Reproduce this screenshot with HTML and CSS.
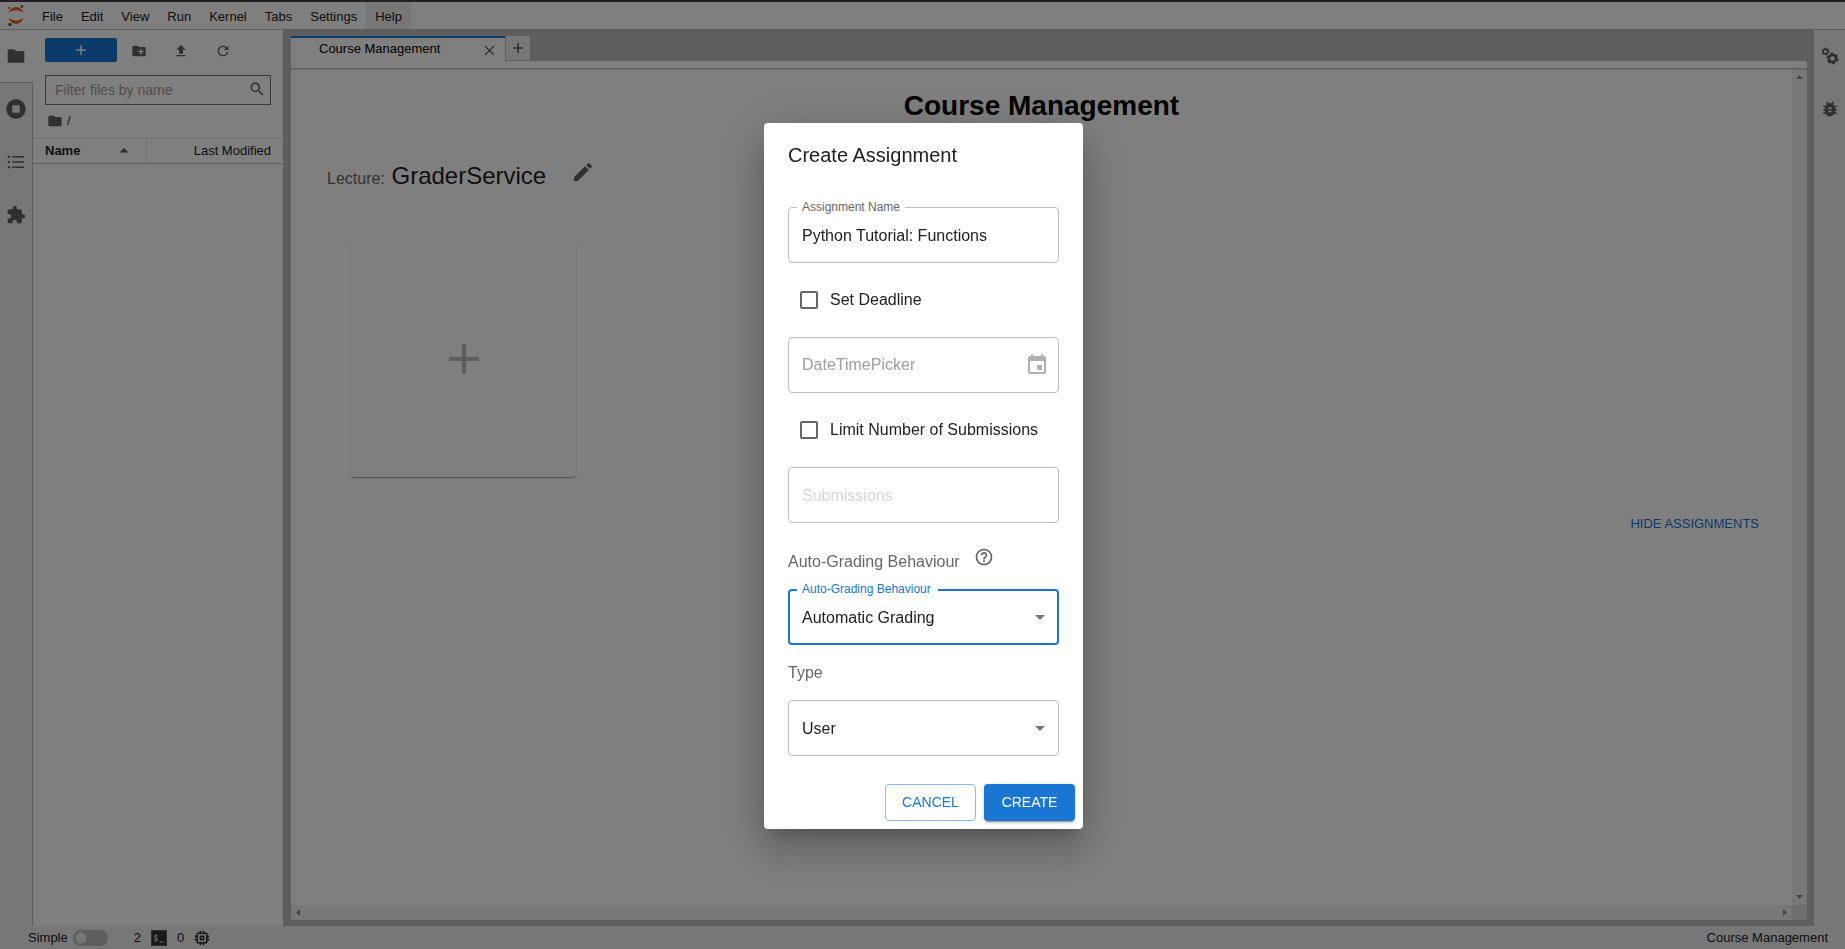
FILE: index.html
```html
<!DOCTYPE html>
<html lang="en">
<head>
<meta charset="utf-8">
<title>Course Management</title>
<link rel="stylesheet" href="styles.css">
</head>
<body>
<div class="app">
  <header class="menubar">
    <svg class="logo" viewBox="0 0 32 27" aria-hidden="true">
      <path fill="#f0600f" d="M8.500 10.800C11 3 21 3 23.500 10.800C19.500 7.500 12.500 7.500 8.500 10.800z"/>
      <path fill="#f0600f" d="M8.500 16C11 23.800 21 23.800 23.500 16C19.500 19.300 12.500 19.300 8.500 16z"/>
      <circle cx="22" cy="4.500" r="1.400" fill="#616161"/><circle cx="9" cy="6" r="0.900" fill="#616161"/><circle cx="10" cy="22.500" r="1.700" fill="#616161"/>
    </svg>
    <nav class="menus">
      <button class="menu">File</button><button class="menu">Edit</button><button class="menu">View</button><button class="menu">Run</button><button class="menu">Kernel</button><button class="menu">Tabs</button><button class="menu">Settings</button><button class="menu menu-active">Help</button>
    </nav>
  </header>

  <div class="workspace">
    <nav class="rail rail-left">
      <button class="rail-tab rail-current" aria-label="File Browser"><svg class="icon-20" viewBox="0 0 24 24"><path d="M10 4H4c-1.100 0-1.990.900-1.990 2L2 18c0 1.100.900 2 2 2h16c1.100 0 2-.900 2-2V8c0-1.100-.900-2-2-2h-8l-2-2z"/></svg></button>
      <button class="rail-tab" aria-label="Running"><svg class="icon-20" viewBox="0 0 512 512"><path d="M256 8C119 8 8 119 8 256s111 248 248 248 248-111 248-248S393 8 256 8zm96 328c0 8.800-7.200 16-16 16H176c-8.800 0-16-7.200-16-16V176c0-8.800 7.200-16 16-16h160c8.800 0 16 7.200 16 16v160z"/></svg></button>
      <button class="rail-tab" aria-label="Table of Contents"><svg class="icon-20" viewBox="0 0 20 20"><path d="M6 4h12v1.500H6zM6 9.300h12v1.500H6zM6 14.500h12V16H6z"/><circle cx="3" cy="4.800" r="1.200"/><circle cx="3" cy="10" r="1.200"/><circle cx="3" cy="15.200" r="1.200"/></svg></button>
      <button class="rail-tab" aria-label="Extensions"><svg class="icon-20" viewBox="0 0 24 24"><path d="M20.500 11H19V7c0-1.100-.900-2-2-2h-4V3.500C13 2.120 11.880 1 10.500 1S8 2.120 8 3.500V5H4c-1.100 0-1.990.900-1.990 2v3.800H3.500c1.490 0 2.700 1.210 2.700 2.700s-1.210 2.700-2.700 2.700H2V20c0 1.100.900 2 2 2h3.800v-1.500c0-1.490 1.210-2.700 2.700-2.700 1.490 0 2.700 1.210 2.700 2.700V22H17c1.100 0 2-.900 2-2v-4h1.500c1.380 0 2.500-1.120 2.500-2.500S21.880 11 20.500 11z"/></svg></button>
    </nav>

    <aside class="files">
      <div class="file-tools">
        <button class="new-launcher" aria-label="New Launcher"><svg class="icon-16" viewBox="0 0 16 16"><path d="M7.300 3.200h1.500v4.100h4.100v1.500H8.800v4.100H7.300V8.800H3.200V7.300h4.100z"/></svg></button>
        <button class="tool" aria-label="New Folder"><svg class="icon-16" viewBox="0 0 24 24"><path d="M20 6h-8l-2-2H4c-1.110 0-1.990.890-1.990 2L2 18c0 1.110.890 2 2 2h16c1.110 0 2-.890 2-2V8c0-1.110-.890-2-2-2zm-1 8h-3v3h-2v-3h-3v-2h3V9h2v3h3v2z"/></svg></button>
        <button class="tool" aria-label="Upload"><svg class="icon-16" viewBox="0 0 24 24"><path d="M9 16h6v-6h4l-7-7-7 7h4zm-4 2h14v2H5z"/></svg></button>
        <button class="tool" aria-label="Refresh"><svg class="icon-16" viewBox="0 0 18 18"><path d="M9 13.500c-2.490 0-4.500-2.010-4.500-4.500S6.510 4.500 9 4.500c1.240 0 2.360.520 3.170 1.330L10 8h5V3l-1.760 1.760C12.150 3.680 10.660 3 9 3 5.690 3 3.010 5.690 3.010 9S5.690 15 9 15c2.970 0 5.430-2.160 5.900-5h-1.520c-.460 2-2.240 3.500-4.380 3.500z"/></svg></button>
      </div>
      <div class="filter">
        <input class="filter-input" type="text" placeholder="Filter files by name" aria-label="Filter files by name">
        <svg class="icon-16" viewBox="0 0 18 18"><path d="M12.100 10.900h-.700l-.200-.200c.800-.900 1.300-2.200 1.300-3.500 0-3-2.400-5.400-5.400-5.400S1.800 4.200 1.800 7.100s2.400 5.400 5.400 5.400c1.300 0 2.500-.500 3.500-1.300l.200.200v.700l4.100 4.100 1.200-1.200-4.100-4.100zm-5 0c-2.100 0-3.700-1.700-3.700-3.700s1.700-3.700 3.700-3.700 3.700 1.700 3.700 3.700-1.600 3.700-3.700 3.700z"/></svg>
      </div>
      <div class="crumbs"><svg class="icon-16" viewBox="0 0 24 24"><path d="M10 4H4c-1.100 0-1.990.900-1.990 2L2 18c0 1.100.900 2 2 2h16c1.100 0 2-.900 2-2V8c0-1.100-.900-2-2-2h-8l-2-2z"/></svg><span>/</span></div>
      <table class="listing">
        <thead><tr>
          <th class="col-name"><span class="col-inner">Name<svg class="sort" viewBox="0 0 10 5"><path d="M0.500 4.500L5 0l4.500 4.500z"/></svg></span></th>
          <th class="col-date">Last Modified</th>
        </tr></thead>
      </table>
    </aside>

    <main class="dock">
      <div class="tabs">
        <div class="tab"><span class="tab-title">Course Management</span><button class="tab-close" aria-label="Close"><svg class="icon-16" viewBox="0 0 16 16"><path d="M4 4l9 9M13 4l-9 9" fill="none" stroke="#616161" stroke-width="1.300"/></svg></button></div>
        <button class="tab-add" aria-label="New tab"><svg class="icon-16" viewBox="0 0 16 16"><path d="M7.200 3h1.600v4.200H13v1.600H8.800V13H7.200V8.800H3V7.200h4.200z"/></svg></button>
      </div>
      <div class="doc-bar"></div>
      <div class="doc">
        <section class="page">
          <h1 class="page-title">Course Management</h1>
          <div class="lecture"><h2 class="lecture-name"><small class="lecture-tag">Lecture:</small> GraderService</h2>
            <button class="edit" aria-label="Edit lecture"><svg class="icon-24" viewBox="0 0 24 24"><path d="M3 17.250V21h3.750L17.810 9.940l-3.750-3.750L3 17.250zM20.710 7.040c.390-.390.390-1.020 0-1.410l-2.340-2.340a.996.996 0 0 0-1.410 0l-1.830 1.830 3.750 3.750 1.830-1.830z"/></svg></button></div>
          <button class="card" aria-label="Add assignment"><svg class="card-plus" viewBox="0 0 30 30"><path d="M13 0h4v13h13v4H17v13h-4V17H0v-4h13z"/></svg></button>
          <button class="hide">HIDE ASSIGNMENTS</button>
        </section>
        <div class="track track-v"><svg class="arrow" viewBox="0 0 15 15"><path d="M4 10l3.500-4L11 10z"/></svg><svg class="arrow" viewBox="0 0 15 15"><path d="M4 5l3.500 4L11 5z"/></svg></div>
        <div class="track track-h"><svg class="arrow" viewBox="0 0 15 15"><path d="M9 4L5 7.500 9 11z"/></svg><svg class="arrow" viewBox="0 0 15 15"><path d="M6 4l4 3.500L6 11z"/></svg></div>
        <div class="track-corner"></div>
      </div>
    </main>

    <nav class="rail rail-right">
      <button class="rail-tab" aria-label="Property Inspector"><svg class="icon-20" viewBox="0 0 20 20">
        <g fill="none" stroke="#616161"><circle cx="5.500" cy="5.500" r="2.400" stroke-width="1.600"/><circle cx="5.500" cy="5.500" r="3.400" stroke-width="1.200" stroke-dasharray="1.600 1.960"/><circle cx="12.500" cy="12.500" r="3.600" stroke-width="2.600"/><circle cx="12.500" cy="12.500" r="5.200" stroke-width="1.600" stroke-dasharray="2.800 2.645"/></g></svg></button>
      <button class="rail-tab" aria-label="Debugger"><svg class="icon-20" viewBox="0 0 24 24"><path d="M20 8h-2.810c-.450-.780-1.070-1.450-1.820-1.960L17 4.410 15.590 3l-2.170 2.170C12.960 5.060 12.490 5 12 5c-.490 0-.960.060-1.410.170L8.410 3 7 4.410l1.620 1.630C7.880 6.550 7.260 7.220 6.810 8H4v2h2.090c-.050.330-.090.660-.090 1v1H4v2h2v1c0 .340.040.670.090 1H4v2h2.810c1.040 1.790 2.970 3 5.190 3s4.150-1.210 5.190-3H20v-2h-2.090c.050-.330.090-.660.090-1v-1h2v-2h-2v-1c0-.340-.040-.670-.090-1H20V8zm-6 8h-4v-2h4v2zm0-4h-4v-2h4v2z"/></svg></button>
    </nav>
  </div>

  <footer class="status">
    <label class="simple">Simple <input class="switch" type="checkbox" role="switch"></label>
    <span class="counts"><span>2</span>
      <svg class="icon-16" viewBox="0 0 16 16"><rect width="16" height="16" fill="#616161"/><rect x="1" y="1" width="14" height="14" fill="#333"/><path d="M6.500 6.200C5.800 5 3.300 5.200 3.300 6.700c0 1.700 3.400 1.100 3.400 2.900 0 1.600-2.800 1.700-3.600.300M5 4.300v7.400M8.500 12h4" fill="none" stroke="#ddd"/></svg>
      <span>0</span>
      <svg class="icon-chip" viewBox="2 2 20 20"><path d="M15 9H9v6h6V9zm-2 4h-2v-2h2v2zm8-2V9h-2V7c0-1.100-.900-2-2-2h-2V3h-2v2h-2V3H9v2H7c-1.100 0-2 .900-2 2v2H3v2h2v2H3v2h2v2c0 1.100.900 2 2 2h2v2h2v-2h2v2h2v-2h2c1.100 0 2-.900 2-2v-2h2v-2h-2v-2h2zm-4 6H7V7h10v10z"/></svg>
    </span>
    <span class="status-right">Course Management</span>
  </footer>
</div>

<div class="backdrop">
  <form class="dialog" role="dialog" aria-labelledby="dialog-title">
    <h2 class="dialog-title" id="dialog-title">Create Assignment</h2>
    <div class="fields">
      <div class="field"><label class="float" for="name">Assignment Name</label><input class="control" id="name" type="text" value="Python Tutorial: Functions"></div>
      <label class="check"><input class="box" type="checkbox">Set Deadline</label>
      <div class="field"><input class="control muted" type="text" placeholder="DateTimePicker" aria-label="DateTimePicker" disabled><svg class="calendar icon-24" viewBox="0 0 24 24"><path d="M17 12h-5v5h5v-5zM16 1v2H8V1H6v2H5c-1.110 0-1.990.900-1.990 2L3 19c0 1.100.890 2 2 2h14c1.100 0 2-.900 2-2V5c0-1.100-.900-2-2-2h-1V1h-2zm3 18H5V8h14v11z"/></svg></div>
      <label class="check"><input class="box" type="checkbox">Limit Number of Submissions</label>
      <div class="field"><input class="control faint" type="text" placeholder="Submissions" aria-label="Submissions" disabled></div>
    </div>
    <div class="caption caption-help"><span>Auto-Grading Behaviour</span><svg class="help icon-20" viewBox="0 0 24 24"><path d="M11 18h2v-2h-2v2zm1-16C6.480 2 2 6.480 2 12s4.480 10 10 10 10-4.480 10-10S17.520 2 12 2zm0 18c-4.410 0-8-3.590-8-8s3.590-8 8-8 8 3.590 8 8-3.590 8-8 8zm0-14c-2.210 0-4 1.790-4 4h2c0-1.100.900-2 2-2s2 .900 2 2c0 2-3 1.750-3 5h2c0-2.250 3-2.500 3-5 0-2.210-1.790-4-4-4z"/></svg></div>
    <div class="field focused"><label class="float" for="grading">Auto-Grading Behaviour</label><select class="control" id="grading"><option>Automatic Grading</option></select><svg class="caret" viewBox="0 0 10 5"><path d="M0 0l5 5 5-5z"/></svg></div>
    <label class="caption caption-type" for="type">Type</label>
    <div class="field"><select class="control" id="type"><option>User</option></select><svg class="caret" viewBox="0 0 10 5"><path d="M0 0l5 5 5-5z"/></svg></div>
    <div class="actions"><button class="btn btn-outline" type="button">CANCEL</button><button class="btn btn-solid" type="button">CREATE</button></div>
  </form>
</div>
</body>
</html>
```
FILE: styles.css
```css
* { box-sizing: border-box; }
body { margin: 0; overflow: hidden; font-family: "Liberation Sans", Arial, sans-serif; font-size: 13px; color: #212121; }
button, input, select { font: inherit; color: inherit; }
button { border: 0; padding: 0; background: none; display: flex; align-items: center; justify-content: center; }
svg { display: block; flex: none; fill: #616161; }
.icon-16 { width: 16px; height: 16px; }
.icon-20 { width: 20px; height: 20px; }
.icon-24 { width: 24px; height: 24px; }
.icon-chip { width: 16px; height: 16px; fill: #333; }

.app { height: 100vh; display: flex; flex-direction: column; background: #eee; border-top: 2px solid #222; }
.menubar { display: flex; height: 28px; background: #fff; border-bottom: 1px solid #bdbdbd; }
.logo { width: 32px; height: 27px; margin-right: 1px; }
.menus { display: flex; }
.menu { padding: 2px 9px 0; }
.menu-active { background: #eee; }

.workspace { flex: 1; display: flex; min-height: 0; }
.rail { display: flex; flex-direction: column; width: 33px; background: #eee; }
.rail-left { background: linear-gradient(#bdbdbd, #bdbdbd) right / 1px 100% no-repeat #eee; }
.rail-right { width: 31px; }
.rail-tab { height: 53px; padding-bottom: 2px; }
.rail-left .rail-tab { padding-right: 1px; }
.rail-left .rail-current { padding-bottom: 0; background: #fff; border-bottom: 1px solid #bdbdbd; }

.files { width: 250px; background: #fff; display: flex; flex-direction: column; }
.file-tools { display: flex; padding: 8px 12px; }
.new-launcher { width: 72px; height: 24px; margin-right: 1px; background: #1976d2; border-radius: 2px; }
.new-launcher svg { fill: #fff; }
.tool { width: 42px; padding-top: 2px; }
.filter { display: flex; align-items: center; height: 30px; margin: 5px 12px 0; border: 1px solid #757575; padding: 0 5px 2px 9px; }
.filter-input { flex: 1; min-width: 0; border: 0; padding: 2px 0 0; outline: 0; background: none; font-size: 14px; }
.filter-input::placeholder { color: #9e9e9e; }
.crumbs { display: flex; align-items: center; gap: 4px; height: 33px; padding: 0 14px 2px; }
.listing { width: 100%; border-collapse: collapse; table-layout: fixed; }
.listing th { height: 25px; padding: 0 12px 1px; border-top: 1px solid #e0e0e0; border-bottom: 1px solid #bdbdbd; text-align: left; }
.listing .col-name { width: 113px; border-right: 1px solid #e0e0e0; }
.listing .col-date { font-weight: 400; text-align: right; }
.col-inner { display: flex; align-items: center; justify-content: space-between; padding-right: 5px; }
.sort { width: 10px; height: 5px; }

.dock { flex: 1; min-width: 0; display: flex; flex-direction: column; background: #bdbdbd; padding: 6px 7px 6px 8px; }
.tabs { display: flex; height: 25px; }
.tab { display: flex; align-items: center; width: 214px; background: #fff; border-top: 2px solid #1976d2; padding: 0 8px 0 28px; color: #000; }
.tab-title { flex: 1; padding-bottom: 2px; }
.tab-add { width: 26px; background: #eee; border: solid #bdbdbd; border-width: 0 1px 1px; }
.doc-bar { height: 8px; background: #fff; border-bottom: 1px solid #bdbdbd; box-shadow: 0 1px 1px rgba(0, 0, 0, .1); position: relative; }
.doc { flex: 1; min-height: 0; display: grid; grid-template: 1fr 15px / 1fr 15px; background: #fff; }
.page { padding: 21px 33px 0 36px; display: flex; flex-direction: column; align-items: flex-start; min-height: 0; }
.page-title { align-self: stretch; margin: 0 -33px 0 -36px; text-align: center; font-size: 28px; line-height: 32px; color: #000; }
.lecture { display: flex; gap: 25px; margin-top: 38px; align-items: flex-start; }
.lecture-name { margin: 0; font-size: 24px; line-height: 32px; font-weight: 400; }
.lecture-tag { font-size: 16px; color: #666; }
.edit { height: 24px; }
.card { width: 225px; height: 237px; margin: 45px 24px 0; border-radius: 4px; background: #fff; box-shadow: 0 2px 1px -1px rgba(0, 0, 0, .2), 0 1px 1px rgba(0, 0, 0, .14), 0 1px 3px rgba(0, 0, 0, .12); }
.card-plus { width: 30px; height: 30px; fill: #bdbdbd; }
.hide { align-self: flex-end; height: 32px; margin-top: 30px; color: #1976d2; }
.track { display: flex; justify-content: space-between; background: #f1f1f1; }
.track-v { flex-direction: column; grid-area: 1 / 2; }
.track-h { grid-area: 2 / 1; }
.track-corner { grid-area: 2 / 2; background: #dcdcdc; }
.arrow { width: 15px; height: 15px; fill: #8a8a8a; }

.status { display: flex; align-items: center; height: 23px; padding: 0 17px 0 28px; }
.simple { display: flex; align-items: center; gap: 5px; }
.switch { appearance: none; width: 35px; height: 16px; margin: 0; border-radius: 8px; background: radial-gradient(circle at 8px 8px, #eee 5px, #bdbdbd 6px); }
.counts { display: flex; align-items: center; gap: 10px; margin-left: 26px; }
.status-right { margin-left: auto; }

.backdrop { position: fixed; inset: 2px 0 0; padding-left: 2px; display: flex; align-items: center; justify-content: center; background: rgba(0, 0, 0, .5); }
.dialog { width: 319px; background: #fff; border-radius: 4px; padding: 0 24px; display: flex; flex-direction: column; font-size: 16px; box-shadow: 0 11px 15px -7px rgba(0, 0, 0, .2), 0 24px 38px 3px rgba(0, 0, 0, .14), 0 9px 46px 8px rgba(0, 0, 0, .12); }
.dialog-title { margin: 16px 0 36px; font-size: 20px; line-height: 32px; font-weight: 400; }
.fields { display: flex; flex-direction: column; gap: 16px; }
.field { position: relative; height: 56px; }
.control { width: 100%; height: 56px; border: 1px solid #bdbdbd; border-radius: 4px; background: #fff; padding: 2px 13px 0; appearance: none; outline: 0; opacity: 1; }
.float { position: absolute; left: 9px; top: -8px; padding: 0 5px; background: #fff; font-size: 12px; line-height: 16px; color: #666; }
.focused .control { border: 2px solid #1976d2; padding: 2px 12px 0; }
.focused .float { color: #1976d2; padding-right: 7px; }
.muted { padding-top: 0; }
.muted::placeholder { color: #9e9e9e; }
.faint::placeholder { color: #d6d6d6; }
.calendar { position: absolute; right: 10px; top: 16px; fill: #b0b0b0; pointer-events: none; }
.caret { position: absolute; right: 14px; top: 26px; width: 10px; height: 5px; fill: #757575; pointer-events: none; }
.check { display: flex; align-items: center; gap: 12px; height: 42px; padding-left: 12px; }
.box { appearance: none; width: 18px; height: 18px; margin: 0; border: 2px solid #666; border-radius: 2px; }
.caption { color: #666; line-height: 24px; }
.caption-help { display: flex; gap: 14px; margin-top: 26px; padding-bottom: 15px; }
.caption-help span { padding-top: 1px; }
.help { margin-top: -2px; }
.caption-type { margin: 16px 0 15px; }
.actions { display: flex; justify-content: flex-end; gap: 8px; margin: 28px -16px 8px; }
.btn { width: 91px; height: 37px; border-radius: 4px; font-size: 14px; }
.btn-outline { border: 1px solid #8cbae8; color: #1976d2; }
.btn-solid { background: #1976d2; color: #fff; box-shadow: 0 3px 1px -2px rgba(0, 0, 0, .2), 0 2px 2px rgba(0, 0, 0, .14), 0 1px 5px rgba(0, 0, 0, .12); }
```
